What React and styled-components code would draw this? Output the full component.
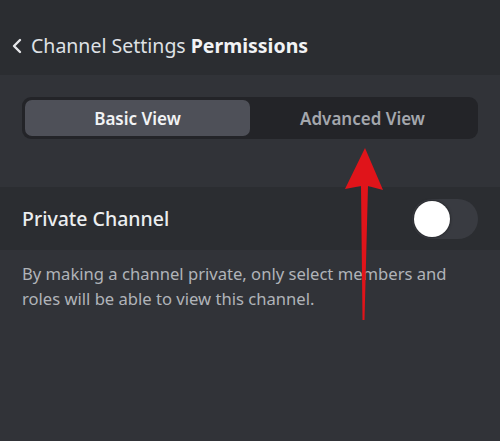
import React, { useState } from 'react'
import styled, { createGlobalStyle } from 'styled-components'

const Global = createGlobalStyle`
  html, body { margin: 0; padding: 0; background: #313338; }
  body { font-family: "Noto Sans", "Open Sans", sans-serif; }
`;

const Page = styled.div`
  position: relative;
  width: 500px;
  height: 441px;
  background: #313338;
  overflow: hidden;
`;

const Header = styled.div`
  height: 75px;
  background: #2b2d31;
  display: flex;
  align-items: center;
  padding: 16px 11px 0;
  box-sizing: border-box;
  color: #e6e7ea;
  font-size: 19.5px;
  gap: 8px;
`;

const Title = styled.div`
  display: flex;
  gap: 5px;
  span { font-weight: 400; color: #dfe1e5; }
  b { font-weight: 700; color: #f2f3f5; }
`;

const TabsWrap = styled.div`
  padding: 22px 22px 48px;
`;

const Segmented = styled.div`
  display: flex;
  background: #232428;
  border-radius: 9px;
  padding: 3px;
  height: 42px;
  box-sizing: border-box;
`;

const Tab = styled.div`
  flex: 1;
  display: flex;
  align-items: center;
  justify-content: center;
  border-radius: 7px;
  font-size: 17px;
  font-weight: 600;
  background: ${p => p.active ? '#4e5058' : 'transparent'};
  color: ${p => p.active ? '#f2f3f5' : '#a4a7ad'};
`;

const Row = styled.div`
  height: 63px;
  background: #2b2d31;
  display: flex;
  align-items: center;
  justify-content: space-between;
  padding: 0 22px;
`;

const RowLabel = styled.div`
  color: #eceef0;
  font-size: 19.5px;
  font-weight: 500;
`;

const Track = styled.div`
  width: 66px;
  height: 40px;
  border-radius: 20px;
  background: #393b41;
  display: flex;
  align-items: center;
  padding: 0 2px;
  box-sizing: border-box;
`;

const Knob = styled.div`
  width: 36px;
  height: 36px;
  border-radius: 50%;
  background: #ffffff;
  box-shadow: 0 0 3px rgba(0, 0, 0, 0.6);
`;

const Note = styled.p`
  margin: 0;
  padding: 11px 22px;
  color: #b0b3b9;
  font-size: 16.6px;
  line-height: 25px;
`;

const Arrow = styled.svg`
  position: absolute;
  left: 0;
  top: 0;
  pointer-events: none;
`;

export default function App() {
  const [view, setView] = useState('basic');
  return (
    <Page>
      <Global />
      <Header>
        <svg width="12" height="16" viewBox="0 0 12 16">
          <path d="M9 2 L3 8 L9 14" stroke="#e6e7ea" strokeWidth="2.4" fill="none" strokeLinecap="round" strokeLinejoin="round" />
        </svg>
        <Title><span>Channel Settings</span><b>Permissions</b></Title>
      </Header>
      <TabsWrap>
        <Segmented>
          <Tab active={view === 'basic'} onClick={() => setView('basic')}>Basic View</Tab>
          <Tab active={view === 'advanced'} onClick={() => setView('advanced')}>Advanced View</Tab>
        </Segmented>
      </TabsWrap>
      <Row>
        <RowLabel>Private Channel</RowLabel>
        <Track><Knob /></Track>
      </Row>
      <Note>By making a channel private, only select members and roles will be able to view this channel.</Note>
      <Arrow width="500" height="441" viewBox="0 0 500 441">
        <path d="M362.5 320 L364.5 320 L368 186 L383 190 L365 148 L345 189 L361 186 Z" fill="#e0141a" />
      </Arrow>
    </Page>
  )
}
